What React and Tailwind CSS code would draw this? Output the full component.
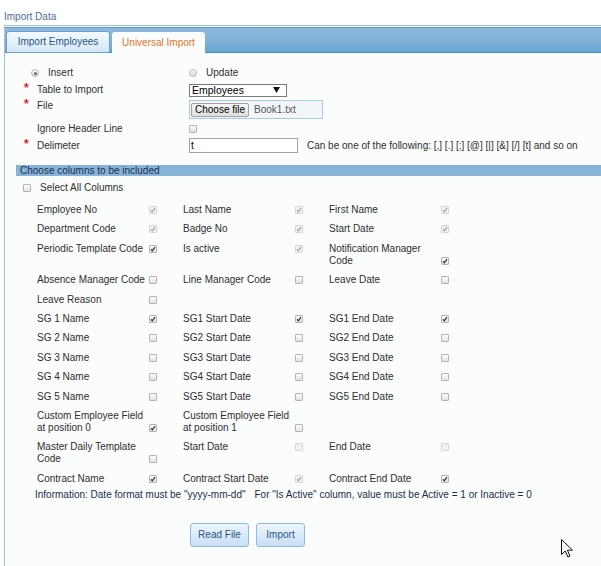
import React from 'react';

const rows = [
  [['Employee No', 'lock'], ['Last Name', 'lock'], ['First Name', 'lock']],
  [['Department Code', 'lock'], ['Badge No', 'lock'], ['Start Date', 'lock']],
  [['Periodic Template Code', 'on'], ['Is active', 'lock'], ['Notification Manager Code', 'on']],
  [['Absence Manager Code', 'off'], ['Line Manager Code', 'off'], ['Leave Date', 'off']],
  [['Leave Reason', 'off']],
  [['SG 1 Name', 'on'], ['SG1 Start Date', 'on'], ['SG1 End Date', 'on']],
  [['SG 2 Name', 'off'], ['SG2 Start Date', 'off'], ['SG2 End Date', 'off']],
  [['SG 3 Name', 'off'], ['SG3 Start Date', 'off'], ['SG3 End Date', 'off']],
  [['SG 4 Name', 'off'], ['SG4 Start Date', 'off'], ['SG4 End Date', 'off']],
  [['SG 5 Name', 'off'], ['SG5 Start Date', 'off'], ['SG5 End Date', 'off']],
  [['Custom Employee Field at position 0', 'on'], ['Custom Employee Field at position 1', 'off']],
  [['Master Daily Template Code', 'off'], ['Start Date', 'dis'], ['End Date', 'dis']],
  [['Contract Name', 'on'], ['Contract Start Date', 'lock'], ['Contract End Date', 'on']],
];

export default function App() {
  return (
    <div className="relative flex h-[566px] w-[601px] flex-col overflow-hidden bg-white font-['Liberation_Sans',Arial,sans-serif] text-[10px] leading-[12px] text-[#2e2e2e]">
      <div className="h-[25px] pl-[4px] pt-[11px] text-[#4d6f94]">Import Data</div>

      <div className="ml-[4px] flex flex-1 flex-col border-l border-t border-[#9cc2de] bg-[#fbfdfd]">
        <div className="mt-[1px] flex h-[26px] items-end border-t border-b border-[#5c9dd5] border-b-[#3a8fd5] bg-gradient-to-b from-[#8dbadd] via-[#83b3d9] to-[#69a4d2]">
          <div className="-mb-px ml-[1px] flex h-[22px] w-[104px] items-center justify-center rounded-t-[3px] border border-[#6a9fd0] bg-gradient-to-b from-[#f5faff] to-[#d4e7f8] text-[#2a5580]">
            Import Employees
          </div>
          <div className="-mb-[2px] ml-[2px] flex h-[22px] w-[93px] items-center justify-center rounded-t-[3px] bg-[#fbfdfd] text-[#e4731d]">
            Universal Import
          </div>
        </div>

        <div className="mt-[13px] flex h-[14px] items-center">
          <div className="flex w-[184px] items-center pl-[26px]">
            <Radio on />
            <span className="ml-[9px]">Insert</span>
          </div>
          <Radio />
          <span className="ml-[9px]">Update</span>
        </div>

        <FormRow label="Table to Import" req className="mt-[3px] h-[14px]">
          <div className="flex h-[13px] w-[98px] items-center justify-between border border-[#7a7a7a] bg-white pl-[2px] pr-[6px] text-[10.5px] text-black">
            <span>Employees</span>
            <svg width="7" height="6" viewBox="0 0 7 6"><polygon points="0,0 7,0 3.5,6" fill="#111" /></svg>
          </div>
        </FormRow>

        <FormRow label="File" req top className="mt-[3px] h-[19px]">
          <div className="flex h-[19px] w-[134px] items-center border border-[#a9c9ea] bg-[#f3f6f9] pl-[1px]">
            <span className="flex h-[14px] items-center rounded-[2px] border border-[#a3a3a3] bg-gradient-to-b from-[#f7f7f7] to-[#dedede] px-[3px] text-black">Choose file</span>
            <span className="ml-[5px] text-[#555]">Book1.txt</span>
          </div>
        </FormRow>

        <FormRow label="Ignore Header Line" className="mt-[4px] h-[12px]">
          <Box state="off" />
        </FormRow>

        <FormRow label="Delimeter" req className="mt-[3px] h-[15px]">
          <div className="flex h-[15px] w-[109px] items-center border border-[#a3a3a3] bg-white pl-[1px] text-black">t</div>
          <span className="ml-[9px] whitespace-nowrap">Can be one of the following: [,] [.] [;] [@] [|] [&amp;] [/] [t] and so on</span>
        </FormRow>

        <div className="ml-[11px] mt-[12px] h-[11px] bg-[#86b4d9] pl-[4px] leading-[11px] text-[#1b2f4d]">Choose columns to be included</div>

        <div className="mt-[6px] flex h-[12px] items-center pl-[18px]">
          <Box state="off" />
          <span className="ml-[9px]">Select All Columns</span>
        </div>

        <div className="mt-[10px] grid grid-cols-[146px_146px_146px] items-start gap-y-[7.4px] pl-[32px]">
          {rows.map((r, i) => (
            <React.Fragment key={i}>
              {[0, 1, 2].map(c => r[c] ? (
                <div key={c} className="flex items-end">
                  <span className="w-[112px]">{r[c][0]}</span>
                  <span className="mb-[2px]"><Box state={r[c][1]} /></span>
                </div>
              ) : <div key={c} />)}
            </React.Fragment>
          ))}
        </div>

        <div className="mt-[4px] flex pl-[30px] text-[#1c2d4c]">
          <span>Information: Date format must be "yyyy-mm-dd"</span>
          <span className="ml-[9px]">For "Is Active" column, value must be Active = 1 or Inactive = 0</span>
        </div>

        <div className="mt-[22px] flex pl-[185px]">
          <Btn className="w-[59px]">Read File</Btn>
          <Btn className="ml-[7px] w-[49px]">Import</Btn>
        </div>
      </div>

      <svg className="absolute left-[561px] top-[539px]" width="13" height="19" viewBox="0 0 13 19">
        <path d="M0.5 0.5 L0.5 15.5 L4.2 12 L6.9 18 L9 17.1 L6.4 11.2 L11.5 11.2 Z" fill="#fff" stroke="#111" strokeWidth="1" strokeLinejoin="round" />
      </svg>
    </div>
  );
}

function FormRow({ label, req, top, className = '', children }) {
  return (
    <div className={`flex items-center ${className}`}>
      <div className={`flex w-[184px] pl-[19px] ${top ? 'self-start' : ''}`}>
        <span className="relative -top-[2px] w-[13px] text-[12px] font-bold text-[#e0201c]">{req ? '*' : ''}</span>
        <span>{label}</span>
      </div>
      {children}
    </div>
  );
}

function Radio({ on }) {
  return (
    <span className="flex h-[8px] w-[8px] items-center justify-center rounded-full border border-[#b9b9b9] bg-gradient-to-b from-[#fafafa] to-[#dcdcdc]">
      {on && <span className="h-[3px] w-[3px] rounded-full bg-[#6b6b6b]" />}
    </span>
  );
}

function Box({ state }) {
  const dim = state === 'lock' || state === 'dis';
  const mark = state === 'on' || state === 'lock';
  return (
    <span className={`flex h-[8px] w-[8px] items-center justify-center rounded-[1px] border ${dim ? 'border-[#d6d6d6] bg-[#f1f1f1]' : 'border-[#b3b3b3] bg-gradient-to-b from-[#fdfdfd] to-[#e2e2e2]'}`}>
      {mark && (
        <svg width="6" height="6" viewBox="0 0 6 6">
          <path d="M1 3.4 L2.3 4.8 L5 1.2" fill="none" stroke={state === 'on' ? '#333' : '#a5a5a5'} strokeWidth="1.3" />
        </svg>
      )}
    </span>
  );
}

function Btn({ className = '', children }) {
  return (
    <div className={`flex h-[24px] items-center justify-center rounded-[3px] border border-[#8fbbe2] bg-gradient-to-b from-[#eef6fe] to-[#c8dff4] text-[#2a5580] ${className}`}>
      {children}
    </div>
  );
}
